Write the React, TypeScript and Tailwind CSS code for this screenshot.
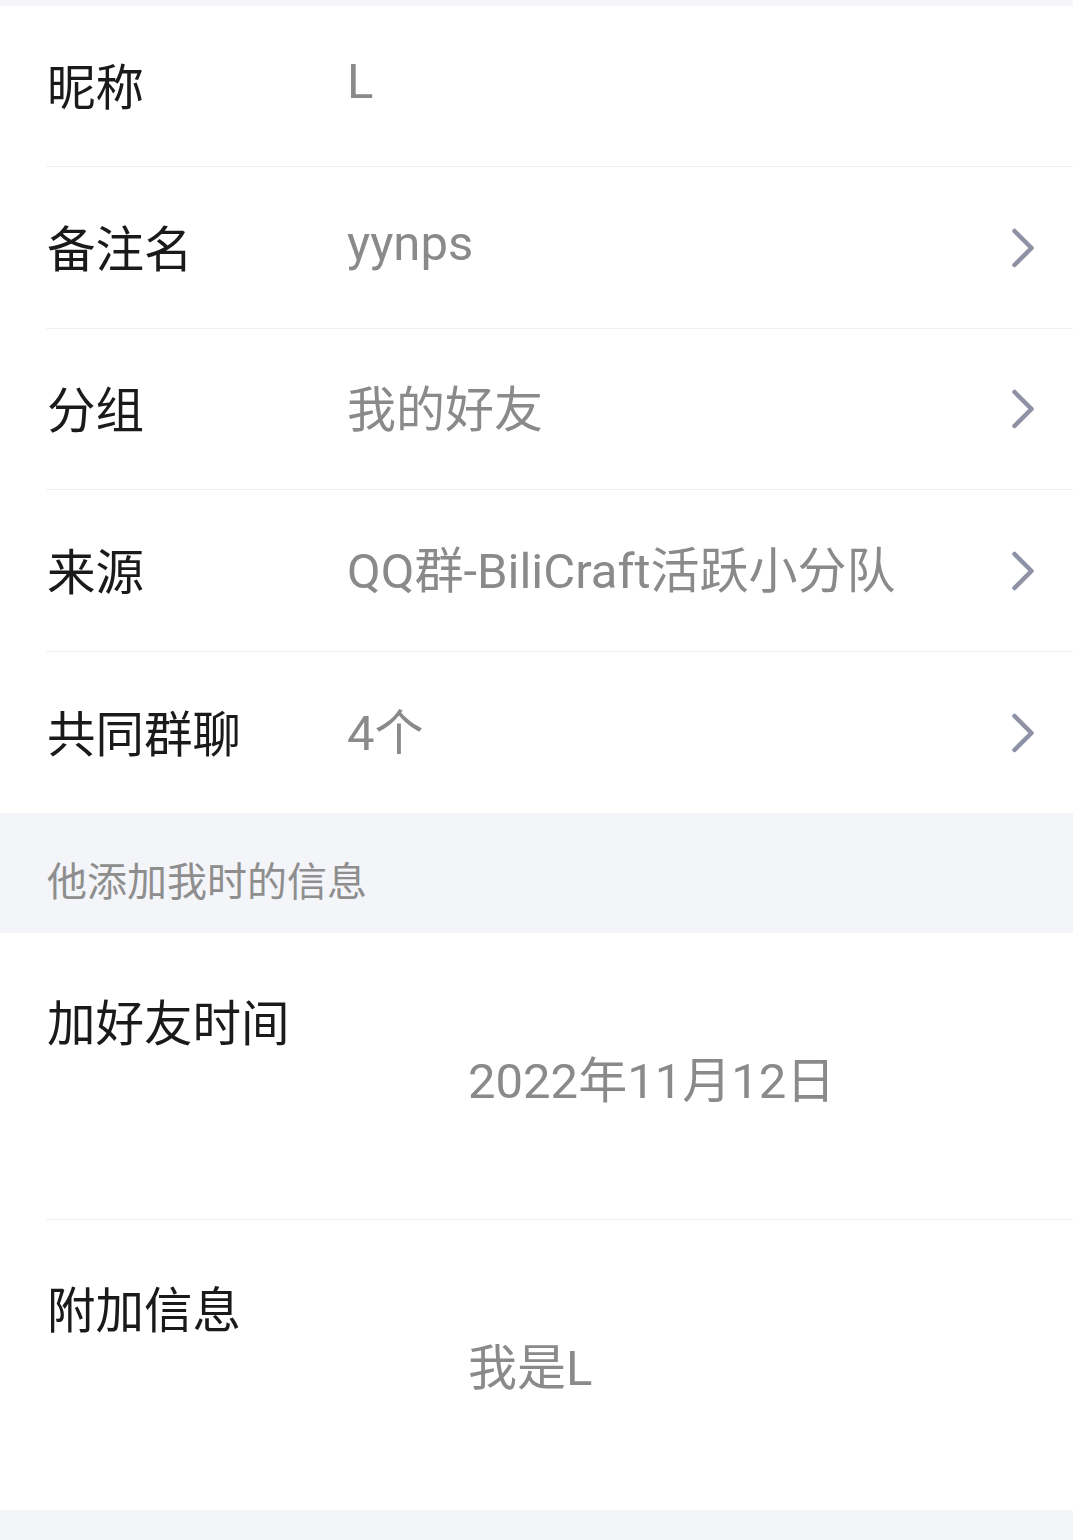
import { ChevronRight } from "lucide-react";

const FONT = { fontFamily: '"Roboto", "Noto Sans CJK SC", sans-serif' };

interface InfoRow {
  label: string;
  value: string;
  arrow?: boolean;
  h: string;
  /** latin-only values sit a little higher than CJK ones */
  shift: string;
}

const rows: InfoRow[] = [
  { label: "昵称", value: "L", h: "h-[161px]", shift: "-mt-[10px]" },
  { label: "备注名", value: "yynps", arrow: true, h: "h-[162px]", shift: "-mt-[8px]" },
  { label: "分组", value: "我的好友", arrow: true, h: "h-[161px]", shift: "mt-[2px]" },
  { label: "来源", value: "QQ群-BiliCraft活跃小分队", arrow: true, h: "h-[162px]", shift: "mt-[2px]" },
  { label: "共同群聊", value: "4个", arrow: true, h: "h-[161px]", shift: "mt-[2px]" },
];

const addInfo = [
  { label: "加好友时间", value: "2022年11月12日" },
  { label: "附加信息", value: "我是L" },
];

export default function App() {
  return (
    <div className="w-[1073px] h-[1540px] bg-[#f4f5f9] overflow-hidden" style={FONT}>
      <div className="h-[6px]" />

      {/* basic info */}
      <div className="bg-white">
        {rows.map((r, i) => (
          <div key={r.label} className="pl-[46px]">
            <div
              className={`${r.h} flex items-center pr-[16px] ${
                i < rows.length - 1 ? "border-b border-[#f0f0f2]" : ""
              }`}
            >
              <span className="w-[301px] shrink-0 pl-[1px] mt-[7px] text-[48.5px] leading-none text-[#1a1a1a]">
                {r.label}
              </span>
              <span className={`flex-1 ${r.shift} text-[49px] leading-none text-[#8a8a8a]`}>
                {r.value}
              </span>
              {r.arrow && (
                <ChevronRight className="w-[68px] h-[68px] text-[#8e92a4]" strokeWidth={1.6} />
              )}
            </div>
          </div>
        ))}
      </div>

      {/* section header */}
      <div className="h-[120px] pt-[42px] pl-[47px] text-[40px] leading-[56px] text-[#8e8e8e]">
        他添加我时的信息
      </div>

      <div className="bg-white h-[577px]">
        {addInfo.map((r, i) => (
          <div key={r.label} className="pl-[46px]">
            <div
              className={`${i === 0 ? "h-[287px] pt-[64px]" : "h-[290px] pt-[64px]"} ${
                i === 0 ? "border-b border-[#f0f0f2]" : ""
              }`}
            >
              <div className="pl-[1px] text-[48.5px] leading-[56px] text-[#1a1a1a]">{r.label}</div>
              <div className="pl-[422px] mt-[1px] text-[49px] leading-[56px] text-[#8a8a8a]">
                {r.value}
              </div>
            </div>
          </div>
        ))}
      </div>
    </div>
  );
}
